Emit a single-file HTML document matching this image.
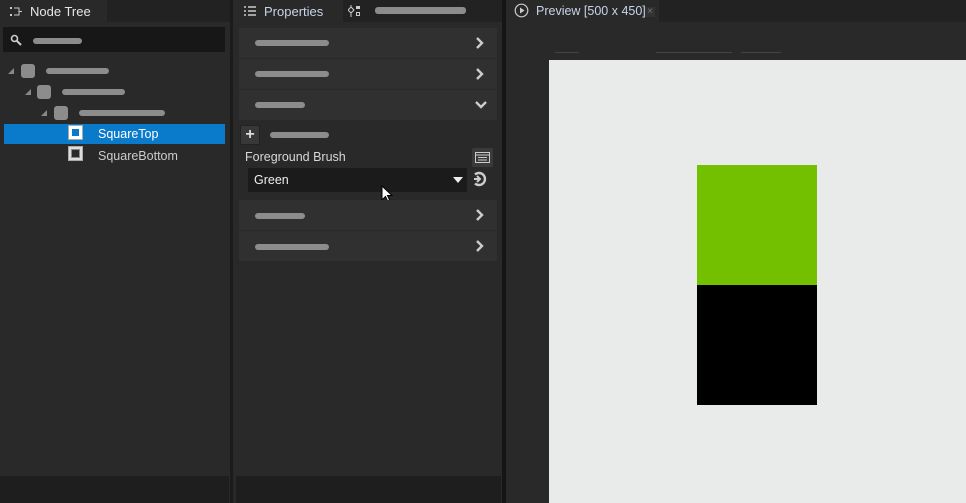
<!DOCTYPE html><html><head><style>
*{margin:0;padding:0;box-sizing:border-box}
body{width:966px;height:503px;background:#292929;position:relative;overflow:hidden;font-family:"Liberation Sans",sans-serif;font-size:12px;color:#ddd}
.a{position:absolute}
.p{position:absolute;height:6px;border-radius:3px;background:#8c8c8c}
.row{position:absolute;left:239px;width:258px;height:30px;background:#303030}
.chev{position:absolute;right:12px;top:9px}
.sq{position:absolute;width:15px;height:15px;border:1px solid #aaa;background:#fff}
.sq i{position:absolute;left:2px;top:2px;width:9px;height:9px;background:#000;border:1px solid #888}
</style></head><body>
<div class="a" style="left:0;top:0;width:966px;height:22px;background:#222"></div>
<div class="a" style="left:0;top:0;width:107px;height:22px;background:#292929"></div>
<div class="a" style="left:233px;top:0;width:110px;height:22px;background:#292929"></div>
<div class="a" style="left:506px;top:0;width:153px;height:22px;background:#292929"></div>
<div class="a" style="left:230px;top:0;width:3px;height:503px;background:#1b1b1b"></div>
<div class="a" style="left:502px;top:0;width:4px;height:503px;background:#151515"></div>
<div class="a" style="left:0;top:476px;width:229px;height:27px;background:#1e1e1e"></div>
<div class="a" style="left:236px;top:476px;width:265px;height:27px;background:#1e1e1e"></div>
<svg class="a" style="left:9px;top:6px" width="14" height="11"><rect x="1" y="1" width="2" height="2" fill="#ccc"/><rect x="1" y="8" width="2" height="2" fill="#ccc"/><path d="M5 2H10V9H5M10 5.5H13" stroke="#ccc" fill="none"/></svg>
<div class="a" style="left:30px;top:4px;font-size:13px;color:#e6e6e6">Node Tree</div>
<div class="a" style="left:3px;top:27px;width:222px;height:25px;background:#171717"></div>
<svg class="a" style="left:10px;top:34px" width="12" height="12"><circle cx="4.5" cy="4.5" r="3" stroke="#ccc" stroke-width="1.6" fill="none"/><path d="M7 7L11 11" stroke="#ccc" stroke-width="2"/></svg>
<div class="p" style="left:33px;top:38px;width:49px"></div>
<svg class="a" style="left:8px;top:68px" width="6" height="6"><path d="M6 0V6H0Z" fill="#888"/></svg>
<div class="a" style="left:21px;top:64px;width:14px;height:14px;border-radius:3px;background:#8c8c8c"></div>
<div class="p" style="left:46px;top:68px;width:63px"></div>
<svg class="a" style="left:25px;top:89px" width="6" height="6"><path d="M6 0V6H0Z" fill="#888"/></svg>
<div class="a" style="left:37px;top:85px;width:14px;height:14px;border-radius:3px;background:#8c8c8c"></div>
<div class="p" style="left:62px;top:89px;width:63px"></div>
<svg class="a" style="left:41px;top:110px" width="6" height="6"><path d="M6 0V6H0Z" fill="#888"/></svg>
<div class="a" style="left:54px;top:106px;width:14px;height:14px;border-radius:3px;background:#8c8c8c"></div>
<div class="p" style="left:79px;top:110px;width:86px"></div>
<div class="a" style="left:4px;top:124px;width:221px;height:20px;background:#0a7acb"></div>
<div class="sq" style="left:68px;top:125px"><i style="background:#0a7acb;border-color:#fff"></i></div>
<div class="a" style="left:98px;top:127px;font-size:12.5px;color:#fff">SquareTop</div>
<div class="sq" style="left:68px;top:146px;background:#ddd"><i style="background:#292929"></i></div>
<div class="a" style="left:98px;top:149px;font-size:12.5px;color:#ccc">SquareBottom</div>
<svg class="a" style="left:244px;top:6px" width="12" height="10"><path d="M0 1H2M4 1H12M0 5H2M4 5H12M0 9H2M4 9H12" stroke="#ccc" stroke-width="1.5"/></svg>
<div class="a" style="left:264px;top:4px;font-size:13px;color:#c8d4e8">Properties</div>
<svg class="a" style="left:348px;top:5px" width="14" height="12"><path d="M3 0V2M3 8V12" stroke="#ccc"/><path d="M3 2L6 5L3 8L0 5Z" stroke="#ccc" fill="none"/><rect x="8" y="1" width="4" height="3" fill="#ccc"/><rect x="8.5" y="7.5" width="3" height="3" stroke="#ccc" fill="none"/></svg>
<div class="p" style="left:375px;top:7px;width:91px;height:7px;background:#8c8c8c"></div>
<div class="row" style="top:28px"><div class="p" style="left:16px;top:12px;width:74px"></div><svg class="chev" width="10" height="12"><path d="M2 1L7 6L2 11" stroke="#ccc" stroke-width="2.4" fill="none"/></svg></div>
<div class="row" style="top:59px"><div class="p" style="left:16px;top:12px;width:74px"></div><svg class="chev" width="10" height="12"><path d="M2 1L7 6L2 11" stroke="#ccc" stroke-width="2.4" fill="none"/></svg></div>
<div class="row" style="top:90px"><div class="p" style="left:16px;top:12px;width:50px"></div><svg class="chev" style="right:10px;top:10px" width="12" height="10"><path d="M1 2L6 7L11 2" stroke="#ccc" stroke-width="2.4" fill="none"/></svg></div>
<div class="a" style="left:240px;top:125px;width:20px;height:20px;background:#383838;border:1px solid #222;border-radius:2px;color:#ddd;font-size:16px;font-weight:bold;text-align:center;line-height:17px">+</div>
<div class="p" style="left:270px;top:132px;width:59px"></div>
<div class="a" style="left:245px;top:150px;font-size:12.5px;color:#d8d8d8">Foreground Brush</div>
<div class="a" style="left:472px;top:148px;width:21px;height:19px;background:#3a3a3a;border-radius:2px"></div>
<svg class="a" style="left:475px;top:152px" width="15" height="11"><rect x="0.5" y="0.5" width="14" height="10" stroke="#ccc" fill="none"/><path d="M0 3H15M3 5.5H12M3 8H12" stroke="#ccc"/></svg>
<div class="a" style="left:248px;top:168px;width:219px;height:24px;background:#1b1b1b"></div>
<div class="a" style="left:254px;top:173px;font-size:12.5px;color:#eee">Green</div>
<svg class="a" style="left:453px;top:177px" width="10" height="6"><path d="M0 0H10L5 6Z" fill="#eee"/></svg>
<svg class="a" style="left:471px;top:171px" width="16" height="16"><path d="M4 3.5A6 6 0 1 1 4 12.5" stroke="#ccc" stroke-width="2.4" fill="none"/><path d="M3 8H9M6 5L9 8L6 11" stroke="#ccc" stroke-width="2" fill="none"/></svg>
<svg class="a" style="left:381px;top:185px" width="12" height="18"><path d="M1 1V15L4.5 11.5L7 17L9 16L6.5 10.5H11Z" fill="#fff" stroke="#000" stroke-width="1"/></svg>
<div class="row" style="top:200px"><div class="p" style="left:16px;top:13px;width:50px"></div><svg class="chev" width="10" height="12"><path d="M2 1L7 6L2 11" stroke="#ccc" stroke-width="2.4" fill="none"/></svg></div>
<div class="row" style="top:231px"><div class="p" style="left:16px;top:13px;width:74px"></div><svg class="chev" width="10" height="12"><path d="M2 1L7 6L2 11" stroke="#ccc" stroke-width="2.4" fill="none"/></svg></div>
<svg class="a" style="left:514px;top:3px" width="15" height="15"><circle cx="7.5" cy="7.5" r="6.3" stroke="#ccc" stroke-width="1.2" fill="none"/><path d="M6 4.5V10.5L10.5 7.5Z" fill="#ccc"/></svg>
<div class="a" style="left:536px;top:4px;font-size:12.5px;color:#c8d4e8">Preview [500 x 450]</div>
<div class="a" style="left:645px;top:7px;width:10px;height:10px;background:#333;color:#777;font-size:10px;line-height:10px;text-align:center">×</div>
<div class="a" style="left:555px;top:52px;width:24px;height:1px;background:#444"></div>
<div class="a" style="left:656px;top:52px;width:76px;height:1px;background:#444"></div>
<div class="a" style="left:741px;top:52px;width:40px;height:1px;background:#444"></div>
<div class="a" style="left:549px;top:60px;width:417px;height:443px;background:#e9ebea"></div>
<div class="a" style="left:697px;top:165px;width:120px;height:120px;background:#72c000"></div>
<div class="a" style="left:697px;top:285px;width:120px;height:120px;background:#000"></div>
</body></html>
